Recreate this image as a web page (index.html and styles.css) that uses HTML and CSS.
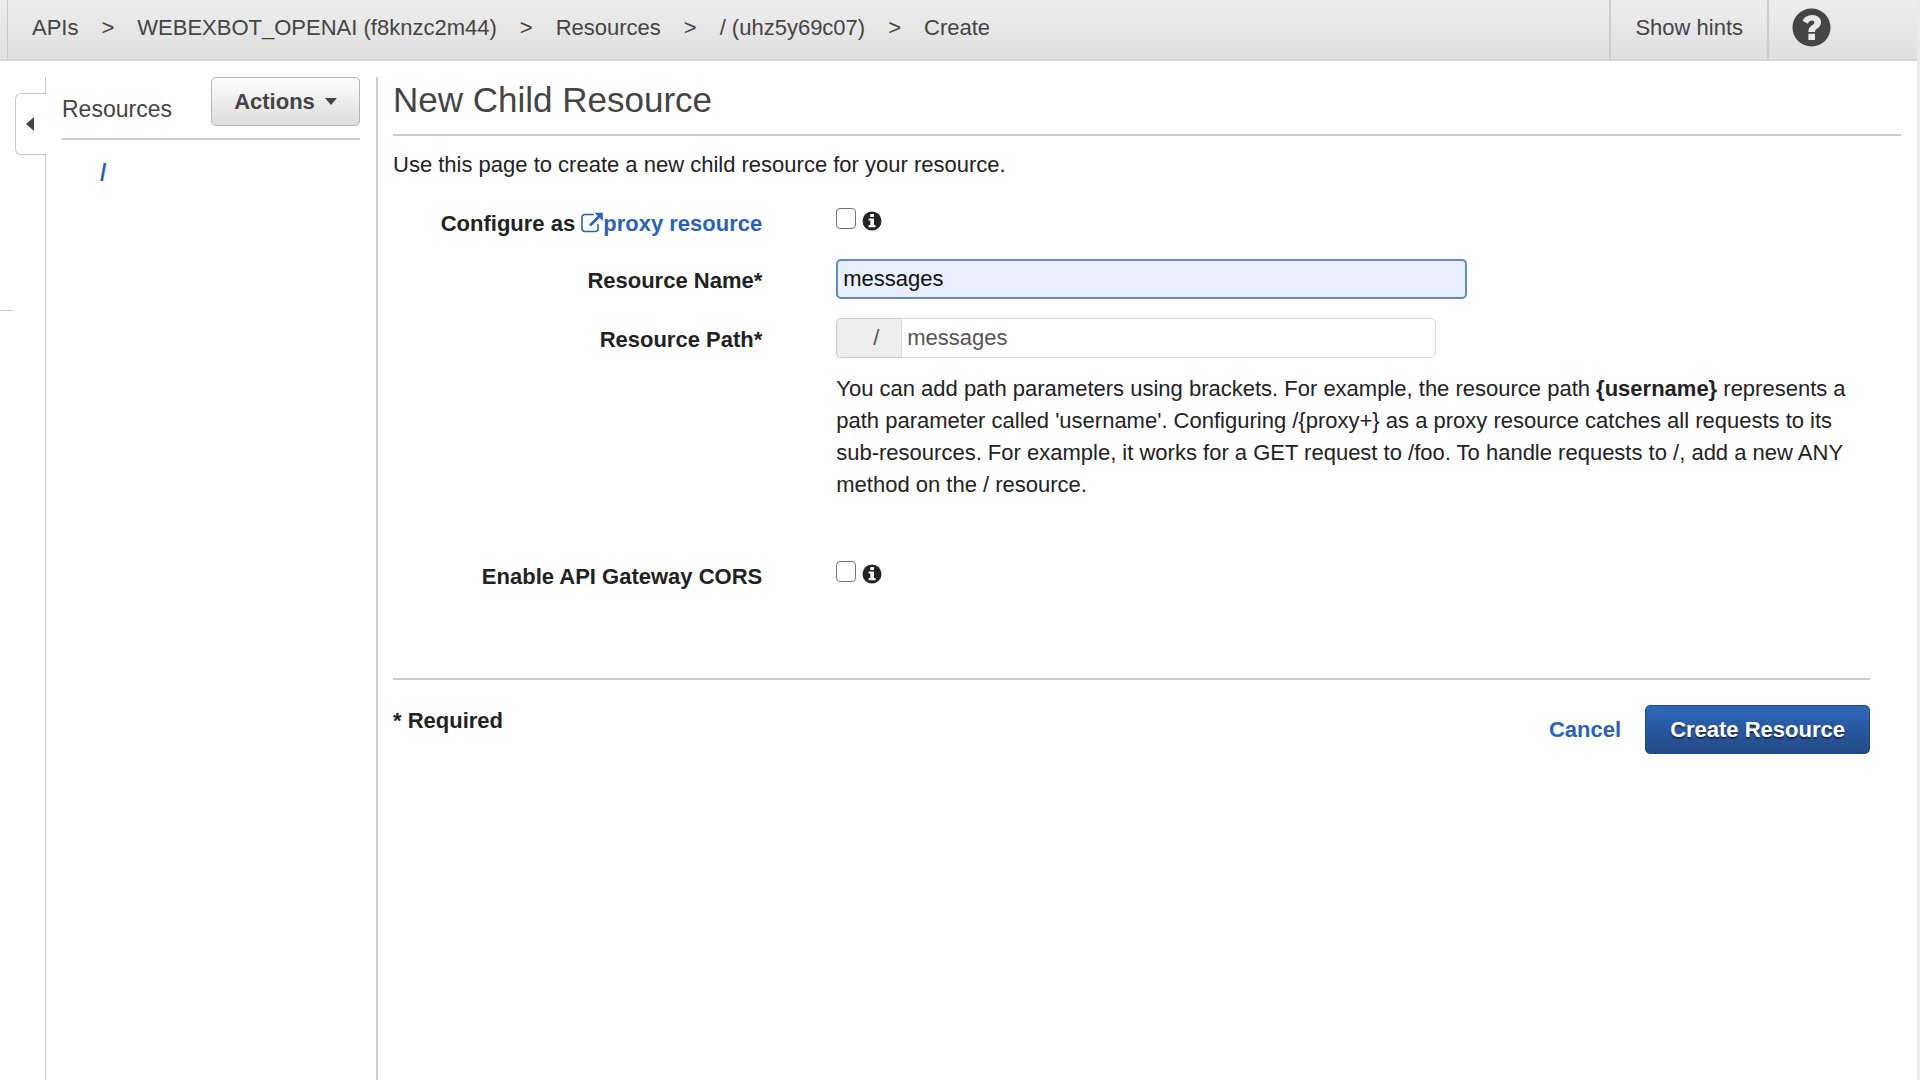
FILE: index.html
```html
<!DOCTYPE html>
<html lang="en">
<head>
<meta charset="utf-8">
<title>New Child Resource</title>
<link rel="stylesheet" href="styles.css">
</head>
<body>
<header class="topbar">
  <nav class="breadcrumbs" aria-label="Breadcrumb">
    <a href="#">APIs</a>
    <span>&gt;</span>
    <a href="#">WEBEXBOT_OPENAI (f8knzc2m44)</a>
    <span>&gt;</span>
    <a href="#">Resources</a>
    <span>&gt;</span>
    <a href="#">/ (uhz5y69c07)</a>
    <span>&gt;</span>
    <a href="#">Create</a>
  </nav>
  <button class="hints" type="button">Show hints</button>
  <button class="help" type="button" aria-label="Help">
    <svg width="39" height="39" viewBox="0 0 40 40" aria-hidden="true">
      <circle cx="20" cy="20" r="19.5" fill="#444"/>
      <path d="M10.8 13.2C12.6 9.300 16 7.200 20.600 7.200C26 7.200 29.800 10.300 29.800 14.600C29.800 17.800 28.200 19.500 25.600 21.200C24 22.300 23.600 22.800 23.600 24.600H16.800C16.800 20.800 18 19.300 20.700 17.600C22.200 16.600 22.900 16 22.900 14.800C22.900 13.600 22 12.800 20.400 12.800C18.600 12.800 17.400 13.800 16.300 16.200ZM16.800 26.400H23.600V32.800H16.800Z" fill="#e8e8e8"/>
    </svg>
  </button>
</header>
<div class="workspace">
  <div class="gutter">
    <div class="gutter-top"></div>
    <button class="collapse" type="button" aria-label="Collapse panel">
      <svg width="8" height="14" viewBox="0 0 8 14" aria-hidden="true"><path d="M8 0V14L0 7Z" fill="#444"/></svg>
    </button>
    <div class="gutter-rest"></div>
  </div>
  <aside class="sidebar">
    <div class="sidebar-head">
      <h2>Resources</h2>
      <button class="actions" type="button">Actions
        <svg width="12" height="7" viewBox="0 0 12 7" aria-hidden="true"><path d="M0 0H12L6 7Z" fill="#444"/></svg>
      </button>
    </div>
    <a class="tree-root" href="#">/</a>
  </aside>
  <main class="content">
    <h1>New Child Resource</h1>
    <form class="form">
      <p class="intro">Use this page to create a new child resource for your resource.</p>
      <div class="row check-row">
        <div class="label"><label for="proxy">Configure as</label>
          <a href="#"><svg width="22" height="22" viewBox="0 0 22 22" aria-hidden="true"><path d="M13 2.500H4Q1 2.500 1 5.500V16.500Q1 19.500 4 19.500H14Q17 19.500 17 16.500V12" fill="none" stroke="currentColor" stroke-width="1.600"/><path d="M9 13.500L18 4.500" stroke="currentColor" stroke-width="2.600"/><path d="M13.500 .8H21.800V9Z" fill="currentColor"/></svg>proxy resource</a></div>
        <div class="checks">
          <input id="proxy" type="checkbox">
          <svg class="info" width="20" height="20" viewBox="0 0 20 20" aria-hidden="true"><circle cx="10" cy="10" r="9.500" fill="#222"/><path d="M8.300 3H12V6H8.300ZM6.600 7.500H12V14H13.500V16.200H6.600V14H8.300V9.600H6.600Z" fill="#fff"/></svg>
        </div>
      </div>
      <div class="row">
        <label class="label" for="name">Resource Name*</label>
        <input class="text name" id="name" type="text" value="messages">
      </div>
      <div class="row">
        <label class="label" for="path">Resource Path*</label>
        <div class="path">
          <span class="prefix">/</span>
          <input class="text" id="path" type="text" value="messages">
        </div>
      </div>
      <p class="hint">You can add path parameters using brackets. For example, the resource path <b>{username}</b> represents a path parameter called 'username'. Configuring /{proxy+} as a proxy resource catches all requests to its sub-resources. For example, it works for a GET request to /foo. To handle requests to /, add a new ANY method on the / resource.</p>
      <div class="row check-row">
        <label class="label" for="cors">Enable API Gateway CORS</label>
        <div class="checks">
          <input id="cors" type="checkbox">
          <svg class="info" width="20" height="20" viewBox="0 0 20 20" aria-hidden="true"><circle cx="10" cy="10" r="9.500" fill="#222"/><path d="M8.300 3H12V6H8.300ZM6.600 7.500H12V14H13.500V16.200H6.600V14H8.300V9.600H6.600Z" fill="#fff"/></svg>
        </div>
      </div>
      <footer class="form-foot">
        <strong>* Required</strong>
        <div class="buttons">
          <button class="cancel" type="button">Cancel</button>
          <button class="create" type="submit">Create Resource</button>
        </div>
      </footer>
    </form>
  </main>
</div>
</body>
</html>
```
FILE: styles.css
```css
* {
  box-sizing: border-box;
}

body {
  margin: 0;
  min-height: 100vh;
  display: flex;
  flex-direction: column;
  border-right: 3px solid #ebebeb;
  background: #fff;
  color: #222;
  font-family: "Liberation Sans", Arial, sans-serif;
  font-size: 22px;
  line-height: 32px;
}

h1,
h2,
p {
  margin: 0;
  font-weight: 400;
}

button,
input {
  font: inherit;
}

a {
  color: #2a62b8;
  text-decoration: none;
}

button {
  border: 0;
  padding: 0;
  background: none;
  cursor: pointer;
}

.topbar {
  display: flex;
  height: 61px;
  padding-left: 7px;
  border-bottom: 2px solid #d5d5d5;
  background: linear-gradient(#eee, #dfdfdf);
  color: #444;
}

.breadcrumbs {
  flex: 1;
  display: flex;
  align-items: center;
  gap: 23px;
  padding: 0 24px 4px;
  border-left: 1px solid #c8c8c8;
}

.breadcrumbs a {
  color: #444;
}

.hints {
  padding: 0 24px 4px;
  border-left: 2px solid #ccc;
  color: #444;
}

.help {
  width: 150px;
  padding: 0 0 4px 23px;
  border-left: 2px solid #ccc;
  text-align: left;
}

.help svg {
  display: block;
}

.workspace {
  flex: 1;
  display: flex;
  padding-top: 16px;
}

.gutter {
  width: 46px;
  display: flex;
  flex-direction: column;
}

.gutter-top {
  height: 16px;
  border-right: 1px solid #c8c8c8;
}

.collapse {
  align-self: flex-end;
  display: flex;
  align-items: center;
  width: 31px;
  height: 62px;
  padding-left: 10px;
  border: 1px solid #c8c8c8;
  border-right: 0;
  border-radius: 6px 0 0 6px;
}

.gutter-rest {
  flex: 1;
  border-right: 1px solid #c8c8c8;
}

.gutter-rest::before {
  content: "";
  display: block;
  width: 13px;
  margin-top: 155px;
  border-top: 1px solid #ccc;
}

.sidebar {
  width: 332px;
  padding: 0 16px;
  border-right: 2px solid #ccc;
}

.sidebar-head {
  display: flex;
  justify-content: space-between;
  height: 63px;
  border-bottom: 2px solid #ccc;
}

.sidebar-head h2 {
  padding-top: 16px;
  color: #444;
  font-size: 23px;
}

.actions {
  display: flex;
  align-items: center;
  justify-content: center;
  gap: 10px;
  width: 149px;
  height: 49px;
  border: 1px solid #b7b7b7;
  border-radius: 5px;
  background: linear-gradient(#fff, #dcdcdc);
  color: #444;
  font-weight: 700;
}

.tree-root {
  display: block;
  padding: 17px 38px;
  font-size: 23px;
  font-weight: 700;
}

.content {
  flex: 1;
  padding: 0 16px 0 15px;
}

h1 {
  height: 59px;
  padding-top: 3px;
  border-bottom: 2px solid #ccc;
  color: #444;
  font-size: 35px;
  line-height: 40px;
}

.form {
  padding: 13px 31px 0 0;
}

.row {
  display: grid;
  grid-template-columns: 25% 1fr;
  column-gap: 74px;
  margin-top: 19px;
}

.form .intro {
  margin-bottom: 27px;
}

.label {
  padding-top: 6px;
  font-weight: 700;
  text-align: right;
}

.check-row .label {
  padding-top: 0;
}

.label svg {
  vertical-align: -3px;
}

.checks {
  display: flex;
  align-items: flex-start;
  gap: 6px;
}

.checks input {
  appearance: none;
  width: 20px;
  height: 21px;
  margin: 0;
  border: 1px solid #767676;
  border-radius: 4px;
  background: #fff;
}

.info {
  margin-top: 3px;
}

.text {
  height: 40px;
  padding: 0 5px;
  border: 1px solid #d8d8d8;
  border-radius: 5px;
  background: #fff;
  color: #555;
}

.name {
  width: 61%;
  border: 2px solid #6489ba;
  background: #e8effd;
  color: #111;
}

.path {
  display: flex;
  width: 58%;
}

.prefix {
  width: 65px;
  padding: 3px 22px 0 0;
  border: 1px solid #ccc;
  border-right: 0;
  border-radius: 5px 0 0 5px;
  background: #eee;
  color: #555;
  text-align: right;
}

.path .text {
  flex: 1;
  min-width: 0;
  border-radius: 0 5px 5px 0;
}

.hint {
  margin: 15px 0 60px calc(25% + 74px);
}

.form-foot {
  display: flex;
  justify-content: space-between;
  margin-top: 85px;
  padding-top: 25px;
  border-top: 2px solid #ccc;
}

.buttons {
  display: flex;
  align-items: center;
  gap: 24px;
}

.cancel {
  color: #2a62b8;
  font-weight: 700;
}

.create {
  height: 49px;
  padding: 0 24px;
  border: 1px solid #1f4788;
  border-radius: 5px;
  background: linear-gradient(#2e66ba, #234a86);
  color: #fff;
  font-weight: 700;
  text-shadow: 0 2px 1px #1a2f50;
}
```
